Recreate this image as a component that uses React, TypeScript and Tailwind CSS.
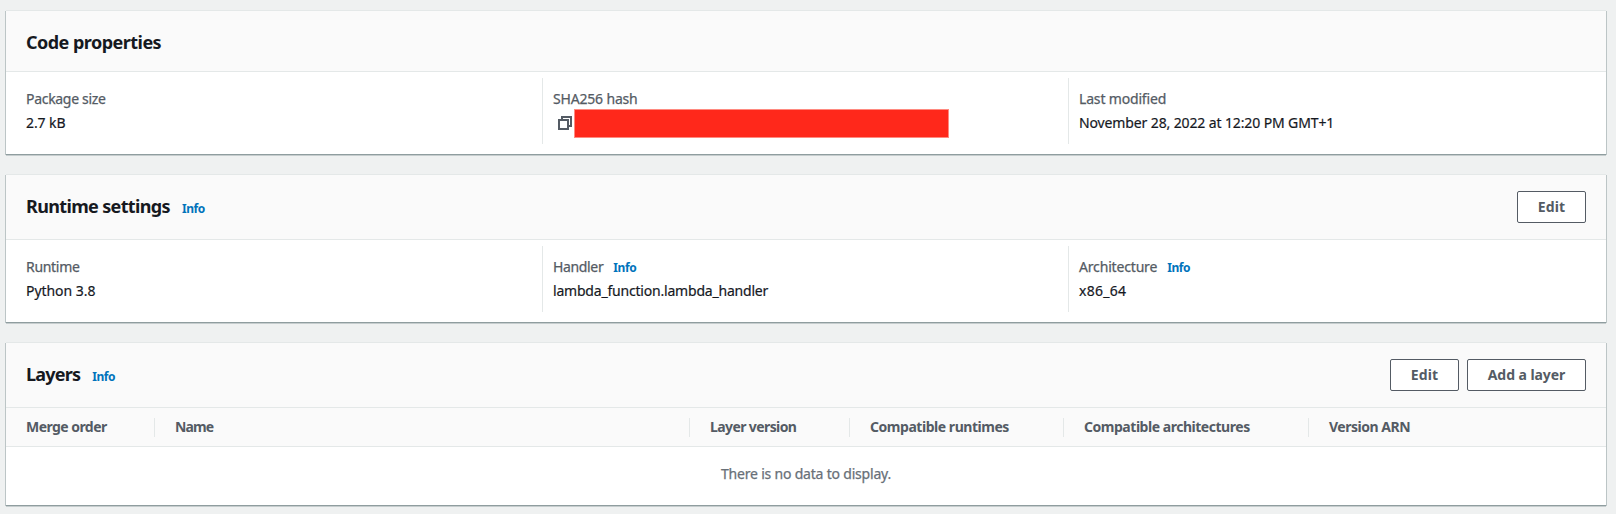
import React, { ReactNode } from "react";

function Info({ className = "" }: { className?: string }) {
  return (
    <a className={`text-[12px] font-bold tracking-[-0.4px] text-[#0073bb] ${className}`}>Info</a>
  );
}

function Card({ children, className = "" }: { children: ReactNode; className?: string }) {
  return (
    <section
      className={`flex flex-col border-t border-[#e4e8e8] bg-white shadow-[0_1px_0_0_#8f9d9f,0_2px_0_0_#c6cdce,1px_1px_0_0_#bcc5c6,-1px_1px_0_0_#bcc5c6] ${className}`}
    >
      {children}
    </section>
  );
}

function Header({
  title,
  tracking,
  info,
  actions,
  className,
}: {
  title: string;
  tracking: string;
  info?: boolean;
  actions?: ReactNode;
  className: string;
}) {
  return (
    <header
      className={`flex justify-between border-b border-[#e4e8e8] bg-[#fafafa] px-5 ${className}`}
    >
      <div className="flex h-[23px] items-baseline gap-3">
        <h2 className={`text-[18px] leading-[22px] font-bold text-[#16191f] ${tracking}`}>{title}</h2>
        {info && <Info className="leading-[18px]" />}
      </div>
      {actions && <div className="-mt-1 flex gap-2">{actions}</div>}
    </header>
  );
}

function Button({ children, className }: { children: ReactNode; className: string }) {
  return (
    <button
      className={`h-8 rounded-[2px] border border-[#545b64] bg-white text-[14px] leading-[22px] font-bold text-[#545b64] ${className}`}
    >
      {children}
    </button>
  );
}

function Field({
  label,
  labelTracking,
  info,
  children,
  className,
}: {
  label: string;
  labelTracking: string;
  info?: boolean;
  children: ReactNode;
  className: string;
}) {
  return (
    <div className={`h-[66px] pt-[10px] ${className}`}>
      <div className="mb-0.5 flex h-[22px] items-baseline gap-[10px] leading-[22px] text-[#545b64]">
        <span className={`[-webkit-text-stroke:0.25px] ${labelTracking}`}>{label}</span>
        {info && <Info />}
      </div>
      <div className="flex h-[22px] leading-[22px] text-[#16191f] [-webkit-text-stroke:0.2px]">{children}</div>
    </div>
  );
}

const first = "w-[536px] shrink-0 pl-5";
const second = "w-[526px] shrink-0 border-l border-[#e4e8e8] pl-[10px]";
const third = "grow border-l border-[#e4e8e8] pl-[10px]";

function CopyIcon() {
  return (
    <svg className="ml-[5px] mt-1 h-[14px] w-[14px] shrink-0" viewBox="0 0 14 14" fill="none" stroke="#545b64" strokeWidth="2">
      <path d="M1 4h9v9H1z" />
      <path d="M4 4V1h9v9h-3" />
    </svg>
  );
}

const columns = [
  { label: "Merge order", width: "w-[148px] tracking-[-0.55px]" },
  { label: "Name", width: "w-[535px] tracking-[-0.85px]" },
  { label: "Layer version", width: "w-[160px] tracking-[-0.6px]" },
  { label: "Compatible runtimes", width: "w-[214px] tracking-[-0.46px]" },
  { label: "Compatible architectures", width: "w-[245px] tracking-[-0.47px]" },
  { label: "Version ARN", width: "grow tracking-[-0.48px]" },
];

export default function App() {
  return (
    <main className="flex h-[514px] flex-col gap-5 overflow-hidden bg-[#eff1f1] pr-[10px] pl-[6px] pt-[10px] font-['Noto_Sans',sans-serif] text-[14px]">
      <Card className="h-[144px] shrink-0">
        <Header title="Code properties" tracking="tracking-[-0.53px]" className="h-[61px] pt-5" />
        <div className="flex pt-[6px]">
          <Field label="Package size" labelTracking="tracking-[-0.3px]" className={first}>
            <span className="tracking-[-0.1px]">2.7 kB</span>
          </Field>
          <Field label="SHA256 hash" labelTracking="tracking-[-0.18px]" className={second}>
            <CopyIcon />
            <div className="-mt-[3px] ml-[2px] h-[29px] w-[375px] shrink-0 border border-[#ff8a80] bg-[#ff281b]" />
          </Field>
          <Field label="Last modified" labelTracking="tracking-[-0.17px]" className={third}>
            <span className="tracking-[-0.12px]">November 28, 2022 at 12:20 PM GMT+1</span>
          </Field>
        </div>
      </Card>

      <Card className="h-[148px] shrink-0">
        <Header
          title="Runtime settings"
          tracking="tracking-[-0.65px]"
          info
          className="h-[65px] pt-5"
          actions={<Button className="w-[69px] tracking-[0.1px]">Edit</Button>}
        />
        <div className="flex pt-[6px]">
          <Field label="Runtime" labelTracking="tracking-[-0.3px]" className={first}>
            <span className="tracking-[-0.05px]">Python 3.8</span>
          </Field>
          <Field label="Handler" labelTracking="tracking-[-0.35px]" info className={second}>
            <span className="tracking-[-0.2px]">lambda_function.lambda_handler</span>
          </Field>
          <Field label="Architecture" labelTracking="tracking-[-0.17px]" info className={third}>
            <span className="tracking-[0.25px]">x86_64</span>
          </Field>
        </div>
      </Card>

      <Card className="h-[163px] shrink-0">
        <Header
          title="Layers"
          tracking="tracking-[-0.8px]"
          info
          className="h-[65px] pt-5"
          actions={
            <>
              <Button className="w-[69px] tracking-[0.1px]">Edit</Button>
              <Button className="w-[119px] tracking-[-0.06px]">Add a layer</Button>
            </>
          }
        />
        <div className="flex h-[39px] items-center border-b border-[#e4e8e8] bg-[#fafafa] font-bold text-[#545b64]">
          {columns.map((c, i) => (
            <div
              key={c.label}
              className={`h-[19px] shrink-0 pl-5 leading-[17px] whitespace-nowrap ${c.width} ${i > 0 ? "border-l border-[#e4e8e8]" : ""}`}
            >
              {c.label}
            </div>
          ))}
        </div>
        <div className="pt-4 text-center leading-[22px] tracking-[-0.2px] text-[#687078] [-webkit-text-stroke:0.25px]">
          There is no data to display.
        </div>
      </Card>
    </main>
  );
}
